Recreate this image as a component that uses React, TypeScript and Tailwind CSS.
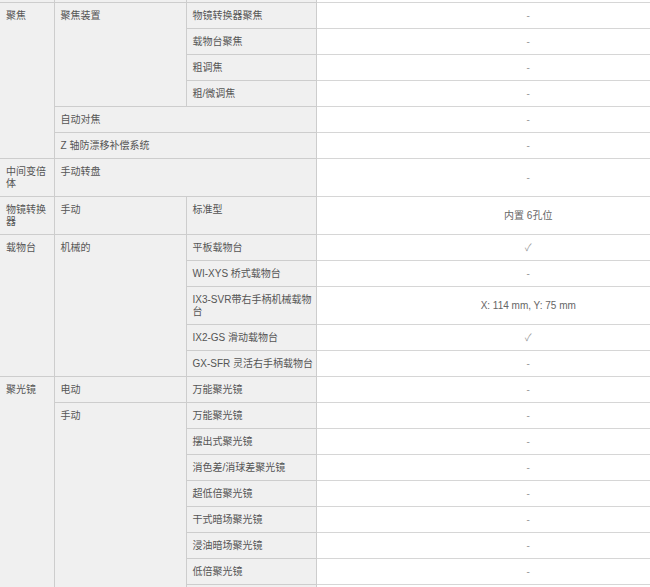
import React from 'react'

type Cell = { text: string; rowSpan?: number; colSpan?: number; nowrap?: boolean }
type Row = { cells: Cell[]; value: string }

const rows: Row[] = [
  { cells: [{ text: '聚焦', rowSpan: 6 }, { text: '聚焦装置', rowSpan: 4 }, { text: '物镜转换器聚焦' }], value: '-' },
  { cells: [{ text: '载物台聚焦' }], value: '-' },
  { cells: [{ text: '粗调焦' }], value: '-' },
  { cells: [{ text: '粗/微调焦' }], value: '-' },
  { cells: [{ text: '自动对焦', colSpan: 2 }], value: '-' },
  { cells: [{ text: 'Z 轴防漂移补偿系统', colSpan: 2 }], value: '-' },
  { cells: [{ text: '中间变倍体' }, { text: '手动转盘', colSpan: 2 }], value: '-' },
  { cells: [{ text: '物镜转换器' }, { text: '手动' }, { text: '标准型' }], value: '内置 6孔位' },
  { cells: [{ text: '载物台', rowSpan: 5 }, { text: '机械的', rowSpan: 5 }, { text: '平板载物台' }], value: '✓' },
  { cells: [{ text: 'WI-XYS 桥式载物台' }], value: '-' },
  { cells: [{ text: 'IX3-SVR带右手柄机械载物台' }], value: 'X: 114 mm, Y: 75 mm' },
  { cells: [{ text: 'IX2-GS 滑动载物台' }], value: '✓' },
  { cells: [{ text: 'GX-SFR 灵活右手柄载物台', nowrap: true }], value: '-' },
  { cells: [{ text: '聚光镜', rowSpan: 10 }, { text: '电动' }, { text: '万能聚光镜' }], value: '-' },
  { cells: [{ text: '手动', rowSpan: 9 }, { text: '万能聚光镜' }], value: '-' },
  { cells: [{ text: '摆出式聚光镜' }], value: '-' },
  { cells: [{ text: '消色差/消球差聚光镜' }], value: '-' },
  { cells: [{ text: '超低倍聚光镜' }], value: '-' },
  { cells: [{ text: '干式暗场聚光镜' }], value: '-' },
  { cells: [{ text: '浸油暗场聚光镜' }], value: '-' },
  { cells: [{ text: '低倍聚光镜' }], value: '-' },
]

export default function App() {
  return (
    <div className="w-[650px] h-[587px] overflow-hidden bg-white font-['Liberation_Sans','Noto_Sans_CJK_SC',sans-serif]">
      <table className="w-[740px] table-fixed border-collapse text-[10px] leading-[12px] text-[#555]">
        <colgroup>
          <col className="w-[54px]" />
          <col className="w-[132px]" />
          <col className="w-[130px]" />
          <col />
        </colgroup>
        <tbody>
          {/* tail of the row above, cut by the crop */}
          <tr>
            <td className="h-[2px] p-0 bg-[#f0f0f0] border-r border-b border-[#cdcdcd]" />
            <td className="h-[2px] p-0 bg-[#f0f0f0] border-r border-b border-[#cdcdcd]" />
            <td className="h-[2px] p-0 bg-[#f0f0f0] border-r border-b border-[#cdcdcd]" />
            <td className="h-[2px] p-0 border-b border-[#d6d6d6]" />
          </tr>
          {rows.map((row, i) => (
            <tr key={i}>
              {row.cells.map((c, j) => (
                <td
                  key={j}
                  rowSpan={c.rowSpan}
                  colSpan={c.colSpan}
                  className={
                    c.nowrap
                      ? 'align-top whitespace-nowrap bg-[#f0f0f0] border-r border-b border-[#cdcdcd] pl-[6px] pr-0 pt-[7px] pb-[6px]'
                      : 'align-top bg-[#f0f0f0] border-r border-b border-[#cdcdcd] pl-[6px] pr-[3px] pt-[7px] pb-[6px] break-words'
                  }
                >
                  {c.text}
                </td>
              ))}
              <td
                className={
                  row.value === '-' || row.value === '✓'
                    ? 'align-middle text-center text-[#9a9a9a] border-b border-[#d6d6d6] pt-[7px] pb-[6px]'
                    : 'align-middle text-center text-[#666] border-b border-[#d6d6d6] pt-[7px] pb-[6px]'
                }
              >
                {row.value}
              </td>
            </tr>
          ))}
          {/* start of the next row, cut by the crop */}
          <tr>
            <td className="h-[20px] p-0 bg-[#f0f0f0] border-r border-[#cdcdcd]" />
            <td className="h-[20px] p-0" />
          </tr>
        </tbody>
      </table>
    </div>
  )
}
